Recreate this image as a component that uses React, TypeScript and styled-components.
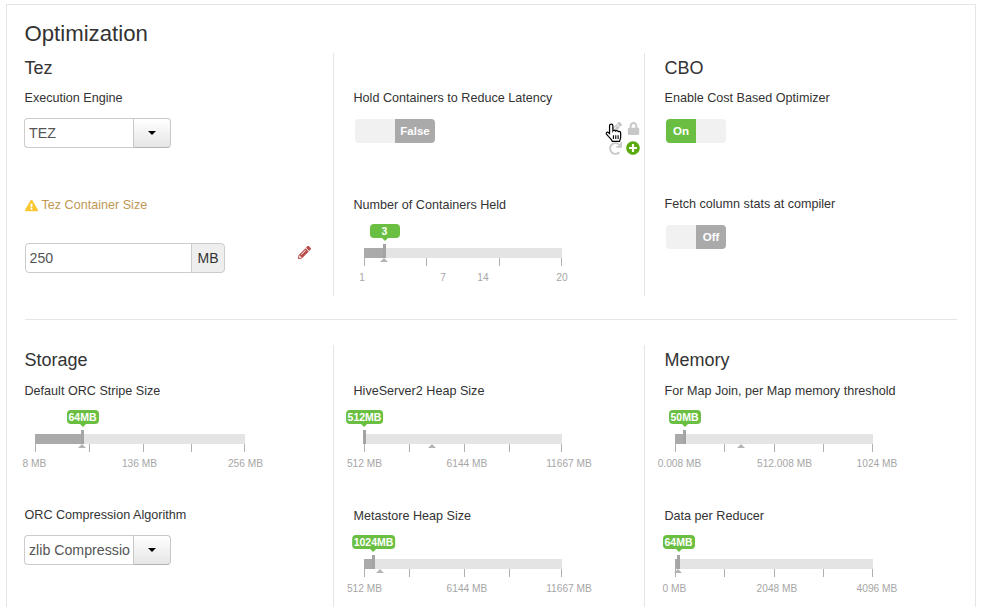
import React from 'react';
import styled, { createGlobalStyle } from 'styled-components';
import { FaExclamationTriangle, FaLock, FaPencilAlt, FaPlusCircle, FaRedo } from 'react-icons/fa';

const GlobalStyle = createGlobalStyle`
  html, body {
    margin: 0;
    height: 612px;
    overflow: hidden;
    background: #fff;
    font-family: "Liberation Sans", Arial, sans-serif;
    color: #333;
  }
`;

const Panel = styled.div`
  box-sizing: border-box;
  width: 970px;
  margin: 4px 0 0 6px;
  padding: 0 18px;
  border: 1px solid #e5e5e5;
  border-bottom: none;
`;

const Title = styled.h2`
  margin: 0 0 0 -0.5px;
  box-sizing: border-box;
  height: 48px;
  padding-top: 15px;
  font-size: 22.2px;
  line-height: 28px;
  font-weight: 400;
`;

const Section = styled.div<{ $height: number }>`
  display: grid;
  grid-template-columns: 308px 311px 313px;
  height: ${(p) => p.$height}px;
`;

const Column = styled.div<{ $divided?: boolean }>`
  position: relative;
  padding-left: ${(p) => (p.$divided ? '20px' : '0')};
  border-left: ${(p) => (p.$divided ? '1px solid #e5e5e5' : 'none')};
`;

const Heading = styled.h4`
  margin: 0 0 0 -0.5px;
  height: 35px;
  font-size: 18px;
  line-height: 30px;
  font-weight: 400;
`;

const Rule = styled.hr`
  margin: 23px 0 25px;
  border: none;
  border-top: 1px solid #e5e5e5;
`;

const Field = styled.div<{ $height: number }>`
  height: ${(p) => p.$height}px;
`;

const Label = styled.div<{ $warn?: boolean; $low?: boolean }>`
  box-sizing: border-box;
  display: flex;
  align-items: center;
  gap: 4px;
  height: 20px;
  padding-top: ${(p) => (p.$low ? '2px' : '0')};
  margin-left: -0.5px;
  font-size: 12.6px;
  line-height: 20px;
  color: ${(p) => (p.$warn ? '#c09853' : '#333')};
  svg {
    color: #fbc730;
    font-size: 13px;
  }
`;

const SelectBox = styled.div<{ $gap?: number }>`
  display: flex;
  width: 147px;
  height: 30px;
  margin: ${(p) => p.$gap ?? 10}px 0 0 -1px;
`;

const SelectInput = styled.input`
  box-sizing: border-box;
  width: 109px;
  padding: 0 0 0 4px;
  border: 1px solid #ccc;
  border-right: none;
  border-radius: 4px 0 0 4px;
  background: #fff;
  font-family: inherit;
  font-size: 14.2px;
  color: #555;
  outline: none;
`;

const SelectButton = styled.button`
  width: 38px;
  padding: 0;
  display: flex;
  align-items: center;
  justify-content: center;
  border: 1px solid #c8c8c8;
  border-bottom-color: #b3b3b3;
  border-radius: 0 4px 4px 0;
  background: linear-gradient(#fff, #e6e6e6);
`;

const Caret = styled.span`
  width: 0;
  height: 0;
  border-left: 4px solid transparent;
  border-right: 4px solid transparent;
  border-top: 4px solid #000;
`;

const InputRow = styled.div`
  display: flex;
  align-items: flex-start;
  justify-content: space-between;
  margin-top: 29px;
  padding-right: 22px;
`;

const InputGroup = styled.div`
  display: flex;
  height: 30px;
`;

const TextInput = styled.input`
  box-sizing: border-box;
  width: 167px;
  padding: 0 0 0 3.5px;
  border: 1px solid #ccc;
  border-radius: 4px 0 0 4px;
  font-family: inherit;
  font-size: 14.2px;
  color: #555;
  outline: none;
`;

const Addon = styled.span`
  box-sizing: border-box;
  width: 34px;
  margin-left: -1px;
  display: flex;
  align-items: center;
  justify-content: center;
  border: 1px solid #ccc;
  border-radius: 0 4px 4px 0;
  background: #eee;
  font-size: 14px;
`;

const EditIcon = styled.span`
  margin-top: 3px;
  font-size: 13px;
  line-height: 13px;
  color: #b94a48;
`;

const ToggleRow = styled.div`
  display: flex;
  align-items: flex-start;
  justify-content: space-between;
  padding-right: 3px;
`;

const Toggle = styled.div<{ $gap?: number; $wide?: boolean }>`
  display: flex;
  width: ${(p) => (p.$wide ? '80px' : '60px')};
  height: 24px;
  margin: ${(p) => p.$gap ?? 11}px 0 0 1px;
  border-radius: 4px;
  overflow: hidden;
  background: #f1f1f1;
`;

const ToggleSide = styled.div<{ $on?: boolean; $off?: boolean }>`
  flex: 1;
  display: flex;
  align-items: center;
  justify-content: center;
  font-size: 11.5px;
  font-weight: 700;
  color: #fff;
  background: ${(p) => (p.$on ? '#6abf42' : p.$off ? '#aaa' : 'transparent')};
`;

const Actions = styled.div`
  position: relative;
  display: grid;
  grid-template-columns: 20px 16px;
  grid-auto-rows: 20px;
  align-items: center;
  justify-items: center;
  margin-top: 10px;
  font-size: 13px;
  color: #c8c8c8;
`;

const AddIcon = styled.span`
  display: flex;
  font-size: 14px;
  color: #5bab0f;
`;

const Cursor = styled.svg`
  position: absolute;
  left: 0;
  top: 5px;
`;

const SliderBox = styled.div<{ $width: number }>`
  position: relative;
  width: ${(p) => p.$width}px;
  height: 60px;
  margin: 10px 0 0 10px;
`;

const Track = styled.div`
  position: absolute;
  top: 24px;
  left: 0;
  right: 0;
  height: 10px;
  background: #e4e4e4;
`;

const Fill = styled.div`
  position: absolute;
  top: 24px;
  left: 0;
  height: 10px;
  background: #aaa;
`;

const Handle = styled.div`
  position: absolute;
  top: 20px;
  width: 3px;
  height: 14px;
  background: #a4a4a4;
`;

const Bubble = styled.div`
  position: absolute;
  top: 0;
  transform: translateX(-50%);
  height: 14px;
  padding: 0 2px;
  min-width: 26px;
  text-align: center;
  border-radius: 4px;
  background: #6abf42;
  color: #fff;
  font-size: 10.5px;
  font-weight: 700;
  line-height: 14px;
  white-space: nowrap;
  &::after {
    content: '';
    position: absolute;
    left: 50%;
    top: 14px;
    margin-left: -3px;
    border-left: 3px solid transparent;
    border-right: 3px solid transparent;
    border-top: 3px solid #6abf42;
  }
`;

const Tick = styled.div`
  position: absolute;
  top: 34px;
  width: 1px;
  height: 8px;
  background: #b0b0b0;
`;

const Marker = styled.div`
  position: absolute;
  top: 34px;
  margin-left: -4px;
  border-left: 4px solid transparent;
  border-right: 4px solid transparent;
  border-bottom: 4px solid #b4b4b4;
`;

const TickLabel = styled.div`
  position: absolute;
  top: 48px;
  transform: translateX(-50%);
  font-size: 10.2px;
  line-height: 12px;
  color: #a6a6a6;
  white-space: nowrap;
`;

interface SliderProps {
  width?: number;
  text: string;
  value: number;
  marker: number;
  ticks: number[];
  labels: [string, number][];
}

function Slider({ width = 198, text, value, marker, ticks, labels }: SliderProps) {
  return (
    <SliderBox $width={width}>
      <Track />
      <Fill style={{ width: value }} />
      {ticks.map((t) => (
        <Tick key={t} style={{ left: t }} />
      ))}
      <Marker style={{ left: marker }} />
      <Handle style={{ left: value - 3 }} />
      <Bubble style={{ left: value - 1.5 }}>{text}</Bubble>
      {labels.map(([l, x]) => (
        <TickLabel key={l} style={{ left: x }}>
          {l}
        </TickLabel>
      ))}
    </SliderBox>
  );
}

function Select({ value, gap }: { value: string; gap?: number }) {
  return (
    <SelectBox $gap={gap}>
      <SelectInput readOnly value={value} />
      <SelectButton>
        <Caret />
      </SelectButton>
    </SelectBox>
  );
}

const heapTicks = [0, 45, 100, 145, 197];
const memTicks = [0, 49, 99, 148, 197];

export default function App() {
  return (
    <>
      <GlobalStyle />
      <Panel>
        <Title>Optimization</Title>
        <Section $height={243}>
          <Column>
            <Heading>Tez</Heading>
            <Field $height={106}>
              <Label>Execution Engine</Label>
              <Select value="TEZ" />
            </Field>
            <Field $height={100}>
              <Label $warn $low>
                <FaExclamationTriangle />
                Tez Container Size
              </Label>
              <InputRow>
                <InputGroup>
                  <TextInput readOnly value="250" />
                  <Addon>MB</Addon>
                </InputGroup>
                <EditIcon>
                  <FaPencilAlt />
                </EditIcon>
              </InputRow>
            </Field>
          </Column>
          <Column $divided>
            <Heading />
            <Field $height={106}>
              <Label>Hold Containers to Reduce Latency</Label>
              <ToggleRow>
                <Toggle $wide>
                  <ToggleSide />
                  <ToggleSide $off>False</ToggleSide>
                </Toggle>
                <Actions>
                  <FaPencilAlt />
                  <FaLock />
                  <FaRedo />
                  <AddIcon>
                    <FaPlusCircle />
                  </AddIcon>
                  <Cursor width="18" height="20" viewBox="0 0 16 18">
                    <path
                      d="M5.5 1C6.5 1 7 1.7 7 2.5V7C7.3 6.5 9 6.4 9.4 7.2C10 6.7 11.4 6.8 11.8 7.7C12.6 7.4 14 7.7 14 9V12.5C14 14 13.4 15 13 16.5H6.5C5.8 15 4.5 13.5 3 12L1.2 10C.6 9 1.6 8 2.6 8.4L4 9.5V2.5C4 1.7 4.6 1 5.5 1Z"
                      fill="#fff"
                      stroke="#000"
                      strokeWidth="1.1"
                    />
                    <path d="M7.5 11V14.5M9.6 11V14.5M11.7 11V14.5" stroke="#000" fill="none" />
                  </Cursor>
                </Actions>
              </ToggleRow>
            </Field>
            <Field $height={100}>
              <Label $low>Number of Containers Held</Label>
              <Slider
                text="3"
                value={22}
                marker={20}
                ticks={[0, 62, 135, 197]}
                labels={[
                  ['1', -2],
                  ['7', 79],
                  ['14', 119],
                  ['20', 198],
                ]}
              />
            </Field>
          </Column>
          <Column $divided>
            <Heading>CBO</Heading>
            <Field $height={106}>
              <Label>Enable Cost Based Optimizer</Label>
              <Toggle>
                <ToggleSide $on>On</ToggleSide>
                <ToggleSide />
              </Toggle>
            </Field>
            <Field $height={100}>
              <Label>Fetch column stats at compiler</Label>
              <Toggle>
                <ToggleSide />
                <ToggleSide $off>Off</ToggleSide>
              </Toggle>
            </Field>
          </Column>
        </Section>
        <Rule />
        <Section $height={262}>
          <Column>
            <Heading>Storage</Heading>
            <Field $height={124}>
              <Label $low>Default ORC Stripe Size</Label>
              <Slider
                width={210}
                text="64MB"
                value={49}
                marker={47}
                ticks={[0, 54, 108, 156, 209]}
                labels={[
                  ['8 MB', -0.5],
                  ['136 MB', 104.5],
                  ['256 MB', 210.5],
                ]}
              />
            </Field>
            <Field $height={100}>
              <Label $low>ORC Compression Algorithm</Label>
              <Select value="zlib Compressio" gap={11} />
            </Field>
          </Column>
          <Column $divided>
            <Heading />
            <Field $height={125}>
              <Label $low>HiveServer2 Heap Size</Label>
              <Slider
                text="512MB"
                value={2}
                marker={68}
                ticks={heapTicks}
                labels={[
                  ['512 MB', 0.5],
                  ['6144 MB', 103],
                  ['11667 MB', 205],
                ]}
              />
            </Field>
            <Field $height={100}>
              <Label $low>Metastore Heap Size</Label>
              <Slider
                text="1024MB"
                value={11}
                marker={16}
                ticks={heapTicks}
                labels={[
                  ['512 MB', 0.5],
                  ['6144 MB', 103],
                  ['11667 MB', 205],
                ]}
              />
            </Field>
          </Column>
          <Column $divided>
            <Heading>Memory</Heading>
            <Field $height={125}>
              <Label $low>For Map Join, per Map memory threshold</Label>
              <Slider
                text="50MB"
                value={11}
                marker={66}
                ticks={memTicks}
                labels={[
                  ['0.008 MB', 4.5],
                  ['512.008 MB', 109.5],
                  ['1024 MB', 202],
                ]}
              />
            </Field>
            <Field $height={100}>
              <Label $low>Data per Reducer</Label>
              <Slider
                text="64MB"
                value={5}
                marker={3}
                ticks={memTicks}
                labels={[
                  ['0 MB', -0.5],
                  ['2048 MB', 102],
                  ['4096 MB', 202],
                ]}
              />
            </Field>
          </Column>
        </Section>
      </Panel>
    </>
  );
}
